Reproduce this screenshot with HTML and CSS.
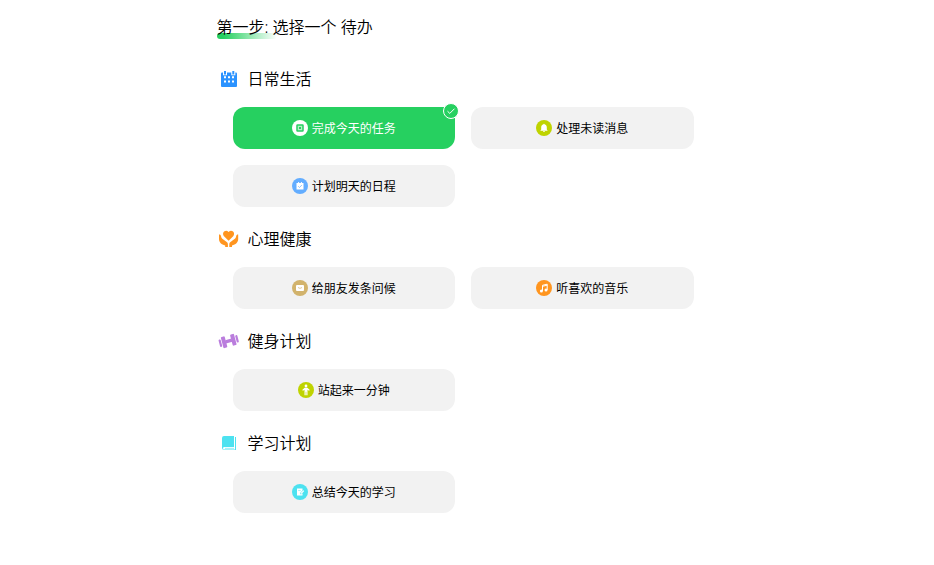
FILE: index.html
```
<!DOCTYPE html>
<html lang="zh-CN">
<head>
    <meta charset="UTF-8">
    <meta name="viewport" content="width=device-width, initial-scale=1.0">
    <title>选择一个待办</title>
    <link rel="stylesheet" href="styles.css">
</head>

<body>
    <div class="container">
        <div class="step-title">第一步: 选择一个 待办</div>

        <div class="group">
            <div class="group-title">
                <svg class="group-icon" viewBox="0 0 24 24">
                    <rect x="4" y="5.500" width="16" height="14.500" rx="1" fill="#2b93ff"/>
                    <path fill="#fff" d="M6 4h4v4.300H6zM14.300 4h4v4.300h-4z"/>
                    <path fill="#2b93ff" d="M7 4h2v3.500H7zM15.300 4h2v3.500h-2z"/>
                    <path fill="#fff" d="M7 9.300h2v2H7zM11 9.300h2v2h-2zM15 9.300h2v2h-2zM7 13.500h2v2H7zM11 13.500h2v2h-2zM15 13.500h2v2h-2z"/>
                </svg>
                <span>日常生活</span>
            </div>
            <div class="todo-list">
                <div class="todo active">
                    <svg class="todo-icon" viewBox="0 0 16 16">
                        <circle cx="8" cy="8" r="8" fill="#fff"/>
                        <rect x="5" y="5" width="6" height="6" rx="0.500" fill="#b5efc8" stroke="#26d060" stroke-width="1.500"/>
                        <rect x="7" y="7" width="2" height="2" fill="#26d060"/>
                    </svg>
                    <span>完成今天的任务</span>
                    <svg class="check" viewBox="0 0 16 16">
                        <circle cx="8" cy="8" r="7.500" fill="#26d060" stroke="#fff"/>
                        <path d="M4.500 8.200l2.300 2.200 4.700-4.700" fill="none" stroke="#fff" stroke-width="1"/>
                    </svg>
                </div>
                <div class="todo">
                    <svg class="todo-icon" viewBox="0 0 16 16">
                        <circle cx="8" cy="8" r="8" fill="#bfd300"/>
                        <path fill="#fff" d="M8 3.800c.5 0 .7.300.7.700 1.400.3 2.100 1.400 2.100 2.800v2.200l.9 1.200H4.300l.9-1.200V7.300c0-1.400.7-2.500 2.100-2.800 0-.4.2-.7.700-.7zM7 11.100h2q-.2.900-1 .9t-1-.9z"/>
                    </svg>
                    <span>处理未读消息</span>
                </div>
                <div class="todo">
                    <svg class="todo-icon" viewBox="0 0 16 16">
                        <circle cx="8" cy="8" r="8" fill="#63adff"/>
                        <path fill="#fff" d="M4.500 5h1.600V4h1v1h1.800V4h1v1h1.600v6.500h-7z"/>
                        <path d="M6.200 8.200l1.300 1.300 2.400-2.500" fill="none" stroke="#63adff" stroke-width=".7"/>
                    </svg>
                    <span>计划明天的日程</span>
                </div>
            </div>
        </div>

        <div class="group">
            <div class="group-title">
                <svg class="group-icon" viewBox="0 0 24 24">
                    <path fill="#ff951f" d="M11.600 13.800L7 9.200C4.300 5.800 8.400 1.900 11.600 5c3.200-3.100 7.300.8 4.600 4.200z"/>
                    <path fill="#ff951f" d="M2 7.500c1-.4 1.600.2 1.900 1.300l.6 1.900c.3.900 1.200 1.300 2.200 2l3 2.300c.9.700 1.200 1.400 1.200 2.400V20H8.200v-1.500C4.500 17.500 2 15.500 2 12zM21.200 7.500c-1-.4-1.600.2-1.900 1.300l-.6 1.900c-.3.900-1.200 1.300-2.200 2l-3 2.300c-.9.700-1.200 1.400-1.200 2.400V20H15v-1.500c3.700-1 6.200-3 6.200-6.500z"/>
                </svg>
                <span>心理健康</span>
            </div>
            <div class="todo-list">
                <div class="todo">
                    <svg class="todo-icon" viewBox="0 0 16 16">
                        <circle cx="8" cy="8" r="8" fill="#d2b36c"/>
                        <rect x="4" y="5" width="8" height="6" rx="1" fill="#fff"/>
                        <path d="M6 7.500Q8 9.300 10 7.500" fill="none" stroke="#d2b36c" stroke-width=".7"/>
                    </svg>
                    <span>给朋友发条问候</span>
                </div>
                <div class="todo">
                    <svg class="todo-icon" viewBox="0 0 16 16">
                        <circle cx="8" cy="8" r="8" fill="#ff951f"/>
                        <path d="M6.500 11V5.300l4.700-1.100v5.700M6.500 6.300l4.700-1.100" fill="none" stroke="#fff"/>
                        <circle cx="5.400" cy="11" r="1.500" fill="#fff"/>
                        <circle cx="10" cy="10" r="1.500" fill="#fff"/>
                    </svg>
                    <span>听喜欢的音乐</span>
                </div>
            </div>
        </div>

        <div class="group">
            <div class="group-title">
                <svg class="group-icon" viewBox="0 0 24 24">
                    <g fill="#ba7ddd" transform="rotate(-15 11.700 12)">
                        <rect x="2" y="8.200" width="2.200" height="7.600" rx="1"/>
                        <rect x="4.900" y="6.200" width="4" height="11.600" rx="1"/>
                        <rect x="8.500" y="10.300" width="6.500" height="3.400"/>
                        <rect x="14.500" y="6.200" width="4" height="11.600" rx="1"/>
                        <rect x="19.200" y="8.200" width="2.200" height="7.600" rx="1"/>
                    </g>
                </svg>
                <span>健身计划</span>
            </div>
            <div class="todo-list">
                <div class="todo">
                    <svg class="todo-icon" viewBox="0 0 16 16">
                        <circle cx="8" cy="8" r="8" fill="#bfd300"/>
                        <circle cx="8" cy="4" r="1.400" fill="#fff"/>
                        <path fill="#fff" d="M6.600 5.700h2.800l2.400 2.200-.8.900-1.500-1.100v5.600H8.300V9.800h-.6v3.500H6.500V7.700L5 8.800l-.8-.9z"/>
                    </svg>
                    <span>站起来一分钟</span>
                </div>
            </div>
        </div>

        <div class="group">
            <div class="group-title">
                <svg class="group-icon" viewBox="0 0 24 24">
                    <path fill="#4de2f0" d="M7 5h10v11H7.500Q6 16 6 17.300T7.500 18.500H18V6h1v13H7.500Q5 19 5 17V7q0-2 2-2z"/>
                    <path fill="#4de2f0" d="M8 16.900h9v.6H8z"/>
                </svg>
                <span>学习计划</span>
            </div>
            <div class="todo-list">
                <div class="todo">
                    <svg class="todo-icon" viewBox="0 0 16 16">
                        <circle cx="8" cy="8" r="8" fill="#4de2f0"/>
                        <path fill="#fff" d="M5 4.500h5.500v2L8.300 8.800v1.400h1.200l1-1v2.300H5z"/>
                        <path d="M9 9.500l2.800-2.800" stroke="#fff" stroke-width="1.200"/>
                        <path d="M6.200 6.500h2.500" stroke="#4de2f0" stroke-width=".5"/>
                    </svg>
                    <span>总结今天的学习</span>
                </div>
            </div>
        </div>
    </div>
</body>

</html>
```
FILE: styles.css
```
* {
    box-sizing: border-box;
}

body {
    margin: 0;
    background: #fff;
    color: #000;
    font-family: "Noto Sans", "Noto Sans CJK SC", sans-serif;
    font-weight: 400;
}

.container {
    width: 501px;
    margin: 0 auto;
    padding-top: 15px;
}

.step-title {
    height: 24px;
    line-height: 24px;
    font-size: 16px;
    font-weight: 350;
    margin-bottom: 28px;
    position: relative;
    z-index: 0;
}

/* green underline behind the text */
.step-title::before {
    content: "";
    position: absolute;
    left: 0;
    top: 18px;
    width: 60px;
    height: 6px;
    border-radius: 3px;
    background: linear-gradient(90deg, #26d060 10%, rgba(38, 208, 96, 0));
    z-index: -1;
}

.group {
    margin-bottom: 20px;
}

.group-title {
    display: flex;
    align-items: center;
    gap: 7px;
    height: 24px;
    line-height: 24px;
    font-size: 16px;
    font-weight: 350;
    margin-bottom: 16px;
}

.group-icon {
    width: 24px;
    height: 24px;
}

.todo-list {
    display: grid;
    grid-template-columns: 1fr 1fr;
    gap: 16px;
    padding: 0 24px 0 16px;
}

.todo {
    position: relative;
    display: flex;
    align-items: center;
    justify-content: center;
    gap: 4px;
    height: 42px;
    border-radius: 12px;
    background: #f2f2f2;
    font-size: 12px;
}

.todo.active {
    background: #26d060;
    color: #fff;
}

.todo-icon {
    width: 16px;
    height: 16px;
}

.check {
    position: absolute;
    top: -4px;
    right: -4px;
    width: 16px;
    height: 16px;
}
```
